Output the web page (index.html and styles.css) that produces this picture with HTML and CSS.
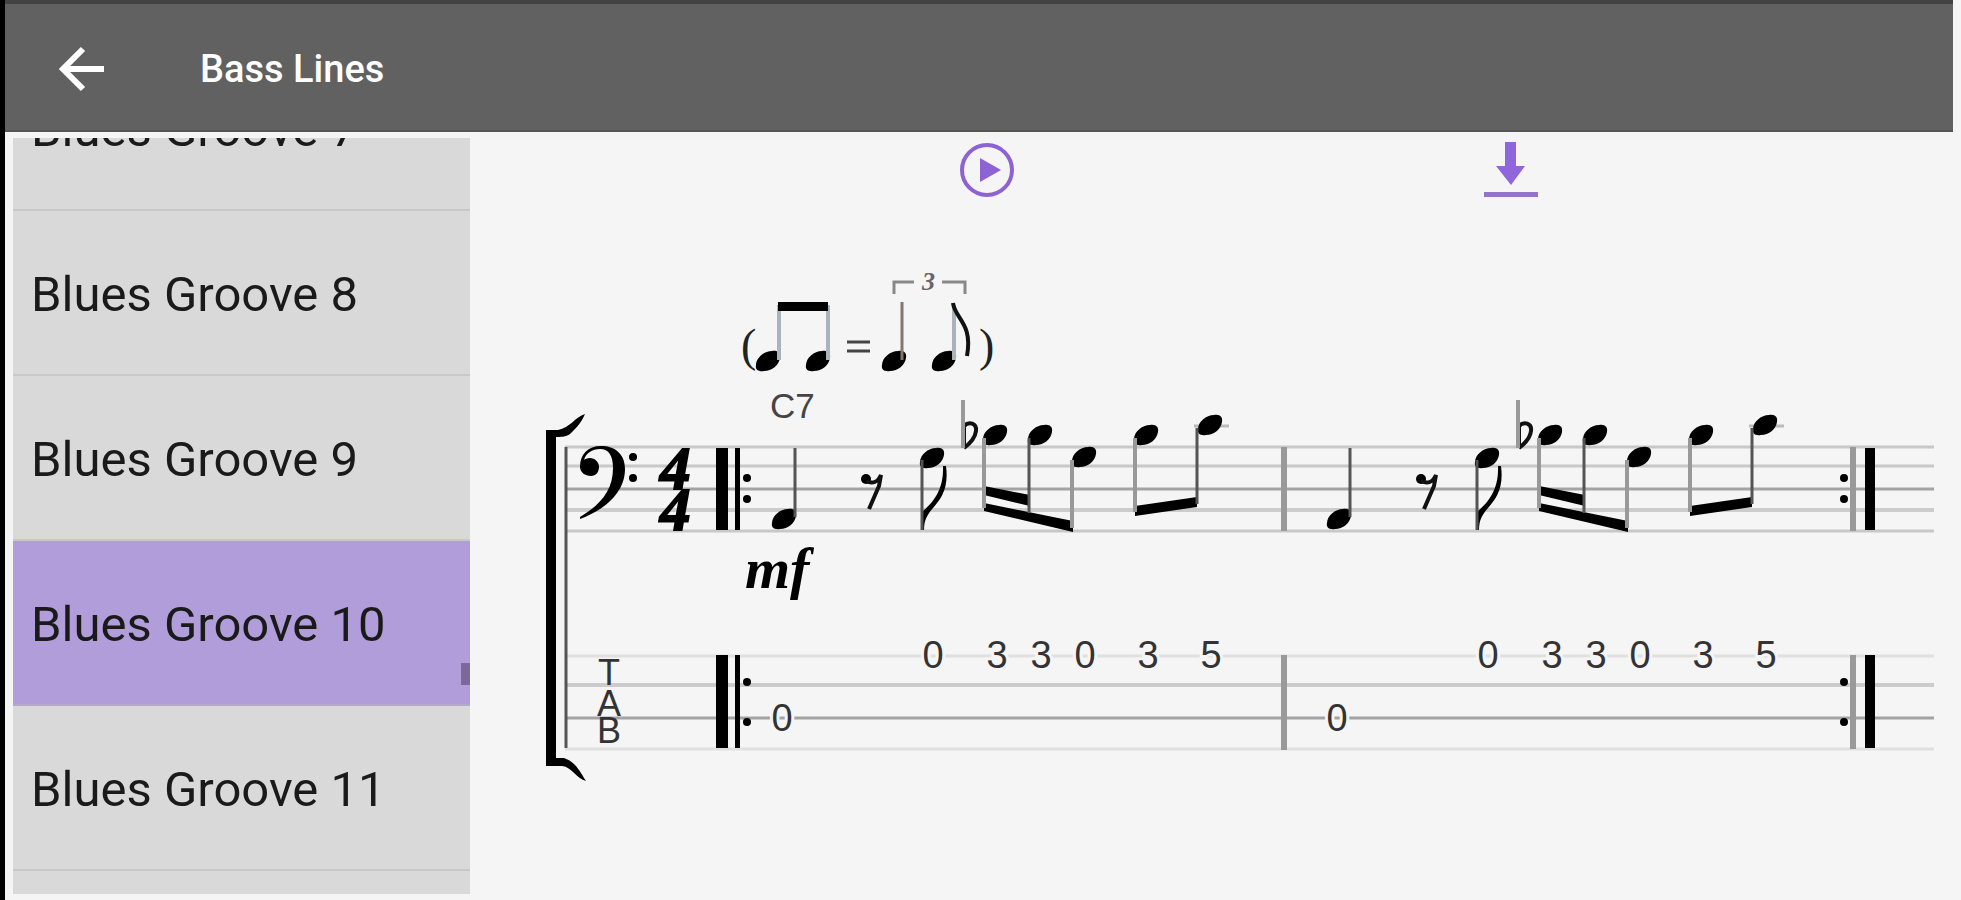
FILE: index.html
```html
<!DOCTYPE html>
<html lang="en">
<head>
    <meta charset="UTF-8">
    <meta name="viewport" content="width=device-width, initial-scale=1.0">
    <title>Bass Lines</title>
    <link rel="stylesheet" href="styles.css">
</head>
<body>
    <header class="toolbar">
        <button type="button" class="icon-btn back" aria-label="Back">
            <svg width="48" height="48" viewBox="0 0 48 48">
                <path d="M47 24H6M26 4L6 24l20 20" fill="none" stroke="#fff" stroke-width="6"/>
            </svg>
        </button>
        <h1>Bass Lines</h1>
    </header>

    <div class="content">
        <nav class="sidebar">
            <ul class="groove-list">
                <li><a href="#groove-7">Blues Groove 7</a></li>
                <li><a href="#groove-8">Blues Groove 8</a></li>
                <li><a href="#groove-9">Blues Groove 9</a></li>
                <li><a href="#groove-10" class="active" aria-current="true">Blues Groove 10</a></li>
                <li><a href="#groove-11">Blues Groove 11</a></li>
            </ul>
            <span class="scroll-thumb"></span>
        </nav>

        <main class="player">
            <div class="actions">
                <button type="button" class="icon-btn" aria-label="Play">
                    <svg width="56" height="56" viewBox="0 0 56 56">
                        <circle cx="28" cy="28" r="25" fill="none" stroke="#8d62d3" stroke-width="4"/>
                        <path d="M21 16v24l21-12z" fill="#8d62d3"/>
                    </svg>
                </button>
                <button type="button" class="icon-btn" aria-label="Download">
                    <svg width="56" height="56" viewBox="0 0 56 56">
                        <path d="M22 0h11v24h9L28 43 13 24h9z" fill="#8f66dc"/>
                        <path d="M1 50h54v5H1z" fill="#9473cb"/>
                    </svg>
                </button>
            </div>

            <svg class="score" viewBox="470 240 1483 560" role="img" aria-label="Blues Groove 10">
                <defs>
                    <path id="head" d="M-12 4C-12-3-4-10 4-10 10-11 13-8 12-3 11 4 4 10-4 10-10 11-13 8-12 4z"/>

                    <!-- one bar of the groove, both bars are the same -->
                    <g id="bar">
                        <use href="#head" x="784" y="519"/>
                        <circle cx="866" cy="479" r="5"/>
                        <path d="M866 481Q876 486 881 475L879 486 869 509" class="pen"/>
                        <use href="#head" x="932" y="458"/>
                        <path d="M922 530V512C932 503 944 491 943 466H946C949 488 941 499 933 508 927 515 924 520 924 530z"/>
                        <path d="M964 448V426C969 421 977 423 976 431 975 439 968 445 964 448" class="pen"/>
                        <use href="#head" x="995" y="435"/>
                        <use href="#head" x="1040" y="435"/>
                        <use href="#head" x="1084" y="457"/>
                        <use href="#head" x="1146" y="435"/>
                        <path d="M1194 426H1229" class="line light"/>
                        <use href="#head" x="1210" y="425"/>
                        <path d="M984 486L1030 495V506L984 495zM984 503L1073 521V532L984 511zM1135 506L1197 497V507L1135 516z"/>
                        <path d="M795 448V517M922 460V530M1029 438V513M1197 428V504" class="stem"/>
                        <path d="M963 400V448M984 438V508M1072 460V528M1135 438V512" class="stem soft"/>
                        <g class="frets">
                            <text x="782" y="731">0</text>
                            <text x="933" y="668">0</text>
                            <text x="997" y="668">3</text>
                            <text x="1041" y="668">3</text>
                            <text x="1085" y="668">0</text>
                            <text x="1148" y="668">3</text>
                            <text x="1211" y="668">5</text>
                        </g>
                    </g>
                </defs>

                <!-- swing marking -->
                <g class="swing">
                    <text x="741" y="361" class="paren">(</text>
                    <use href="#head" x="768" y="361"/>
                    <use href="#head" x="818" y="361"/>
                    <path d="M779 305V360M828 305V360" class="stem faint"/>
                    <path d="M778 302H828V311H778z"/>
                    <path d="M847 342H870M847 351H870" class="line dark"/>
                    <use href="#head" x="894" y="361"/>
                    <path d="M902 302V360" class="stem brown"/>
                    <use href="#head" x="944" y="361"/>
                    <path d="M954 305V360" class="stem faint"/>
                    <path d="M953 303C955 319 973 323 967 356" class="pen"/>
                    <text x="979" y="361" class="paren">)</text>
                    <path d="M894 294V282H914M942 282H965V294" class="bracket"/>
                    <text x="922" y="290" class="tuplet">3</text>
                </g>
                <text x="770" y="418" class="chord">C7</text>

                <!-- staff and tab lines -->
                <path d="M565 447H1934M565 466H1934M565 531H1934" class="line mid"/>
                <path d="M565 489H1934M565 718H1934" class="line dim"/>
                <path d="M565 510H1934M565 685H1934" class="line wide"/>
                <path d="M565 656H1934M565 749H1934" class="line pale"/>

                <path d="M546 430H558C570 428 575 417 585 414 581 424 573 431 570 434 566 437 560 437 556 437V758H564C576 762 580 772 586 781 577 779 572 767 562 766H546z"/>
                <path d="M566 447V748" class="stem"/>

                <!-- bass clef and time signature -->
                <path d="M580 519C604 510 625 493 625 469 625 454 615 446 601 446 588 446 580 454 580 467 580 472 585 476 591 476 596 476 599 472 599 467 599 462 595 458 590 458 587 458 585 459 584 460 586 453 592 449 600 449 609 449 613 456 613 468 613 491 600 505 580 517z"/>
                <circle cx="633" cy="457" r="4"/>
                <circle cx="633" cy="478" r="4"/>
                <text x="660" y="489" class="time">4</text>
                <text x="660" y="530" class="time">4</text>
                <text x="745" y="588" class="dynamic">mf</text>

                <g class="tab">
                    <text x="609" y="685">T</text>
                    <text x="609" y="716">A</text>
                    <text x="609" y="743">B</text>
                </g>

                <!-- repeat signs -->
                <path d="M716 448H728V530H716zM735 448H740V530H735zM716 655H728V748H716zM735 655H740V748H735z"/>
                <path d="M1865 448H1875V530H1865zM1865 655H1875V748H1865z"/>
                <path d="M1284 447V531M1284 655V750M1853 447V531M1853 655V749" class="barline"/>
                <g>
                    <circle cx="747" cy="478" r="4"/>
                    <circle cx="747" cy="499" r="4"/>
                    <circle cx="747" cy="682" r="4"/>
                    <circle cx="747" cy="722" r="4"/>
                    <circle cx="1844" cy="478" r="4"/>
                    <circle cx="1844" cy="499" r="4"/>
                    <circle cx="1844" cy="682" r="4"/>
                    <circle cx="1844" cy="722" r="4"/>
                </g>

                <use href="#bar"/>
                <use href="#bar" x="555"/>
            </svg>
        </main>
    </div>
</body>
</html>
```

FILE: styles.css
```css
:root {
    --bar: #616161;
    --page: #f5f5f5;
    --row: #d9d9d9;
    --row-line: #c8c8c8;
    --active: #b29ddb;
}

* {
    box-sizing: border-box;
}

body {
    margin: 0;
    height: 100vh;
    display: flex;
    flex-direction: column;
    background-color: var(--page);
    border-left: 5px solid #000;
    padding-right: 8px;
    font-family: Roboto, "Liberation Sans", sans-serif;
    overflow: hidden;
}

.toolbar {
    flex: none;
    display: flex;
    align-items: center;
    gap: 95px;
    height: 132px;
    padding: 4px 52px 0;
    background-color: var(--bar);
    border-top: 4px solid #434343;
    border-bottom: 2px solid #565656;
}

.toolbar h1 {
    margin: 0;
    color: #fff;
    font-size: 38px;
    font-weight: 500;
}

.icon-btn {
    display: flex;
    padding: 0;
    border: none;
    background: none;
    cursor: pointer;
}

.content {
    flex: 1;
    min-height: 0;
    display: flex;
    padding: 6px 0 6px 8px;
}

.sidebar {
    position: relative;
    flex: none;
    width: 457px;
    overflow: hidden;
    background-color: var(--row);
}

/* list is scrolled part way into its first row */
.groove-list {
    list-style: none;
    margin: -92px 0 0;
    padding: 0;
}

.groove-list a {
    display: flex;
    align-items: center;
    height: 165px;
    padding: 4px 0 0 18px;
    border-bottom: 2px solid var(--row-line);
    color: #1a1a1a;
    font-size: 49px;
    text-decoration: none;
}

.groove-list a.active {
    background-color: var(--active);
    border-bottom-color: #b5a9c9;
}

.scroll-thumb {
    position: absolute;
    right: 0;
    top: 525px;
    width: 9px;
    height: 22px;
    background-color: #7c6899;
}

.player {
    flex: 1;
    min-width: 0;
}

.actions {
    display: flex;
    justify-content: center;
    gap: 468px;
    padding: 4px 0 42px 75px;
}

.score {
    display: block;
    width: 100%;
    height: auto;
}

.score text {
    font-family: "Liberation Sans", Arial, sans-serif;
    fill: #222;
}

.score .paren {
    font-family: "Liberation Serif", serif;
    font-size: 46px;
}

.score .tuplet {
    font-family: "Liberation Serif", serif;
    font-size: 26px;
    font-weight: bold;
    font-style: italic;
    fill: #666;
}

.score .chord {
    font-size: 35px;
    fill: #444;
}

.score .time {
    font-family: "Liberation Serif", serif;
    font-size: 61px;
    font-weight: bold;
    font-style: italic;
    fill: #000;
    stroke: #000;
    stroke-width: 2px;
}

.score .dynamic {
    font-family: "Liberation Serif", serif;
    font-size: 58px;
    font-weight: bold;
    font-style: italic;
    fill: #000;
}

.frets text,
.tab text {
    font-size: 38px;
    text-anchor: middle;
    fill: #333;
    stroke: var(--page);
    stroke-width: 6px;
    paint-order: stroke;
}

.tab text {
    font-size: 36px;
    stroke: none;
}

.line,
.stem,
.pen,
.bracket,
.barline {
    fill: none;
}

.line {
    stroke-width: 3px;
}

.line.mid { stroke: #c8c8c8; }
.line.dim { stroke: #a3a3a3; }
.line.wide { stroke: #cccccc; stroke-width: 4px; }
.line.pale { stroke: #e0e0e0; }
.line.light { stroke: #bbb; }
.line.dark { stroke: #444; }

.stem {
    stroke: #555;
    stroke-width: 3px;
}

.stem.soft { stroke: #999; stroke-width: 4px; }
.stem.faint { stroke: #a9b3bb; stroke-width: 4px; }
.stem.brown { stroke: #81776f; }

.pen {
    stroke: #111;
    stroke-width: 4px;
}

.bracket {
    stroke: #888;
    stroke-width: 3px;
}

.barline {
    stroke: #999;
    stroke-width: 6px;
}
```
